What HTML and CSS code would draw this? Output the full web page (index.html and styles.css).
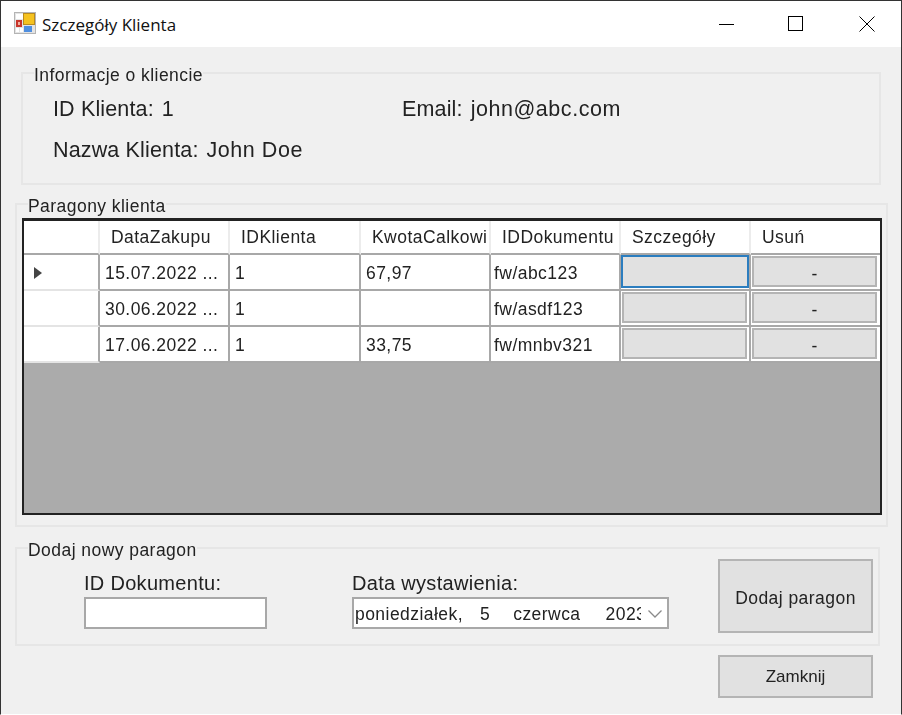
FILE: index.html
```html
<!DOCTYPE html>
<html lang="pl">
<head>
  <meta charset="UTF-8" />
  <title>Szczegóły Klienta</title>
  <link rel="stylesheet" href="styles.css">
</head>
<body>
  <div class="window">
    <div class="titlebar">
      <svg class="app-icon" width="22" height="22" viewBox="0 0 22 22">
        <rect x="0.5" y="0.5" width="21" height="21" fill="#e4e4e4" stroke="#b4b4b4"/>
        <rect x="2" y="2" width="7" height="5" fill="#fff"/>
        <rect x="9.5" y="1.5" width="11" height="11" fill="#f5c21f" stroke="#b98a1e"/>
        <rect x="2" y="8" width="6" height="7" fill="#c8352b"/>
        <rect x="4" y="10" width="2" height="3" fill="#f0b0a0"/>
        <rect x="2" y="16" width="3" height="4" fill="#fff"/>
        <rect x="6" y="16" width="3" height="4" fill="#fff"/>
        <rect x="10" y="14" width="8" height="6" fill="#4f8fe0"/>
      </svg>
      <span class="title">Szczegóły Klienta</span>
      <div class="win-buttons">
        <svg class="win-btn" width="16" height="16" viewBox="0 0 16 16"><path d="M0 8.5H15" stroke="#000"/></svg>
        <svg class="win-btn win-max" width="16" height="16" viewBox="0 0 16 16"><rect x="0.5" y="0.5" width="14" height="14" fill="none" stroke="#000"/></svg>
        <svg class="win-btn" width="16" height="16" viewBox="0 0 16 16"><path d="M0.5 0.5L15.5 15.5M15.5 0.5L0.5 15.5" stroke="#000"/></svg>
      </div>
    </div>

    <div class="content">
      <div class="group group-info">
        <div class="group-title">Informacje o kliencie</div>
        <div class="info-grid">
          <div><span class="info-label">ID Klienta:</span> <span class="info-value">1</span></div>
          <div><span class="info-label">Email:</span> <span class="info-value">john@abc.com</span></div>
          <div><span class="info-label">Nazwa Klienta:</span> <span class="info-value">John Doe</span></div>
        </div>
      </div>

      <div class="group group-receipts">
        <div class="group-title">Paragony klienta</div>
        <div class="data-grid">
          <table>
            <colgroup>
              <col class="col-head"><col class="col-std"><col class="col-wide"><col class="col-std"><col class="col-std"><col class="col-std"><col class="col-last">
            </colgroup>
            <thead>
              <tr>
                <th></th><th>DataZakupu</th><th>IDKlienta</th><th>KwotaCalkowi</th><th>IDDokumentu</th><th>Szczegóły</th><th>Usuń</th>
              </tr>
            </thead>
            <tbody>
              <tr>
                <td class="row-head"><span class="row-arrow"></span></td>
                <td>15.07.2022 ...</td><td>1</td><td>67,97</td><td class="doc-cell">fw/abc123</td>
                <td class="btn-cell"><button class="grid-btn focused"></button></td>
                <td class="btn-cell"><button class="grid-btn">-</button></td>
              </tr>
              <tr>
                <td class="row-head"></td>
                <td>30.06.2022 ...</td><td>1</td><td></td><td class="doc-cell">fw/asdf123</td>
                <td class="btn-cell"><button class="grid-btn"></button></td>
                <td class="btn-cell"><button class="grid-btn">-</button></td>
              </tr>
              <tr>
                <td class="row-head"></td>
                <td>17.06.2022 ...</td><td>1</td><td>33,75</td><td class="doc-cell">fw/mnbv321</td>
                <td class="btn-cell"><button class="grid-btn"></button></td>
                <td class="btn-cell"><button class="grid-btn">-</button></td>
              </tr>
            </tbody>
          </table>
        </div>
      </div>

      <div class="group group-add">
        <div class="group-title">Dodaj nowy paragon</div>
        <div class="add-row">
          <div class="field field-id">
            <label>ID Dokumentu:</label>
            <input class="text-input" type="text">
          </div>
          <div class="field field-date">
            <label>Data wystawienia:</label>
            <div class="date-picker">
              <div class="date-text"><span>poniedziałek,</span><span class="d-day">5</span><span class="d-month">czerwca</span><span class="d-year">2023</span></div>
              <svg class="chevron" width="16" height="10" viewBox="0 0 16 10"><path d="M1.5 1.5L8 8L14.5 1.5" fill="none" stroke="#8a8a8a" stroke-width="1.3"/></svg>
            </div>
          </div>
          <button class="btn btn-add">Dodaj paragon</button>
        </div>
      </div>

      <div class="footer">
        <button class="btn btn-close">Zamknij</button>
      </div>
    </div>
  </div>
</body>
</html>
```

FILE: styles.css
```css
html, body {
  margin: 0;
  padding: 0;
  height: 100%;
  background-color: #333;
}
body {
  font-family: "Liberation Sans", Arial, sans-serif;
  color: #222;
  overflow: hidden;
}
.window {
  box-sizing: border-box;
  width: 902px;
  height: 715px;
  border: 1px solid #333;
  border-bottom-color: #fff;
  display: flex;
  flex-direction: column;
}
.titlebar {
  height: 46px;
  flex: none;
  background-color: #fff;
  display: flex;
  align-items: center;
  padding-left: 13px;
}
.app-icon {
  flex: none;
  margin-right: 6px;
  margin-top: -2px;
}
.title {
  font-family: "Open Sans", sans-serif;
  font-size: 17px;
  color: #111;
}
.win-buttons {
  margin-left: auto;
  display: flex;
  gap: 54px;
  padding-right: 26px;
  margin-top: -1px;
}
.win-btn {
  display: block;
}
.win-max {
  margin-left: -1px;
  margin-right: 1px;
}
.content {
  flex: 1;
  background-color: #f0f0f0;
  padding-left: 14px;
  display: flex;
  flex-direction: column;
  filter: blur(0.35px);
}
.group {
  box-sizing: border-box;
  border: 2px solid #e6e6e6;
}
.group-title {
  width: fit-content;
  background-color: #f0f0f0;
  font-size: 17.5px;
  line-height: 20px;
  letter-spacing: 0.45px;
  margin-top: -9px;
}
.group-info {
  width: 860px;
  height: 113px;
  margin: 25px 0 0 6px;
  padding-left: 11px;
}
.info-grid {
  display: grid;
  grid-template-columns: 349px 1fr;
  row-gap: 16px;
  margin-top: 12px;
  padding-left: 19px;
  font-size: 21.5px;
  line-height: 25px;
}
.info-label {
  margin-right: 2px;
  letter-spacing: 0.15px;
}
.info-value {
  letter-spacing: 0.55px;
}
.group-receipts {
  width: 873px;
  height: 324px;
  margin-top: 18px;
  padding-left: 11px;
}
.data-grid {
  box-sizing: border-box;
  width: 860px;
  height: 297px;
  margin: 2px 0 0 -6px;
  border: 2px solid #222;
  border-top-width: 3px;
  background-color: #ababab;
}
table {
  border-collapse: separate;
  border-spacing: 0;
  table-layout: fixed;
  width: 856px;
  font-size: 17.5px;
  letter-spacing: 0.45px;
}
.col-head { width: 76px; }
.col-std { width: 130px; }
.col-wide { width: 131px; }
.col-last { width: 129px; }
th, td {
  box-sizing: border-box;
  background-color: #fff;
  overflow: hidden;
  white-space: nowrap;
}
th {
  height: 34px;
  padding: 0 0 0 11px;
  text-align: left;
  font-weight: normal;
  border-right: 2px solid #ececec;
  border-bottom: 2px solid #a8a8a8;
}
td {
  height: 36px;
  padding: 2px 0 0 5px;
  border-right: 2px solid #a8a8a8;
  border-bottom: 2px solid #a8a8a8;
}
th:last-child, td:last-child {
  border-right: none;
}
td.doc-cell {
  padding-left: 3px;
}
td.row-head {
  padding: 2px 0 0 10px;
  border-bottom-color: #e4e4e4;
}
.row-arrow {
  display: block;
  width: 0;
  height: 0;
  border-left: 8px solid #444;
  border-top: 6px solid transparent;
  border-bottom: 6px solid transparent;
}
td.btn-cell {
  padding: 0 0 0 1px;
  vertical-align: top;
}
.grid-btn {
  display: block;
  box-sizing: border-box;
  width: 125px;
  height: 31px;
  margin: 1px 0 0 0;
  padding: 5px 0 0 0;
  font: inherit;
  color: #222;
  background-color: #e1e1e1;
  border: 2px solid #b4b4b4;
}
.grid-btn.focused {
  width: 128px;
  height: 33px;
  margin: 0 0 0 -1px;
  border-color: #2b7dbf;
}
.group-add {
  width: 865px;
  height: 99px;
  margin-top: 20px;
  padding-left: 11px;
}
.add-row {
  display: flex;
  align-items: flex-start;
  padding-left: 56px;
}
.field {
  display: flex;
  flex-direction: column;
  margin-top: 12px;
}
.field label {
  font-size: 20px;
  line-height: 22px;
  letter-spacing: 0.3px;
  margin-bottom: 3px;
}
.field-id {
  width: 268px;
}
.text-input {
  box-sizing: border-box;
  width: 183px;
  height: 32px;
  margin: 0;
  background-color: #fff;
  border: 2px solid #a8a8a8;
}
.field-date {
  width: 366px;
}
.date-picker {
  box-sizing: border-box;
  width: 317px;
  height: 32px;
  background-color: #fff;
  border: 2px solid #a8a8a8;
  display: flex;
  align-items: center;
  font-size: 17.5px;
  letter-spacing: 0.45px;
  padding: 2px 0 0 1px;
}
.date-text {
  width: 286px;
  overflow: hidden;
  white-space: nowrap;
  display: flex;
  flex: none;
}
.d-day { margin-left: 17px; }
.d-month { margin-left: 23px; }
.d-year { margin-left: 25px; }
.chevron {
  flex: none;
  margin-left: 6px;
}
.btn {
  box-sizing: border-box;
  width: 155px;
  margin: 0;
  padding: 0;
  font-family: inherit;
  font-size: 17.5px;
  letter-spacing: 0.45px;
  color: #222;
  background-color: #e1e1e1;
  border: 2px solid #b4b4b4;
}
.btn-add {
  height: 74px;
  margin-top: -1px;
  padding-top: 4px;
}
.footer {
  display: flex;
  padding-left: 703px;
  margin-top: 9px;
}
.btn-close {
  height: 43px;
  font-size: 17px;
  letter-spacing: 0;
}
```
